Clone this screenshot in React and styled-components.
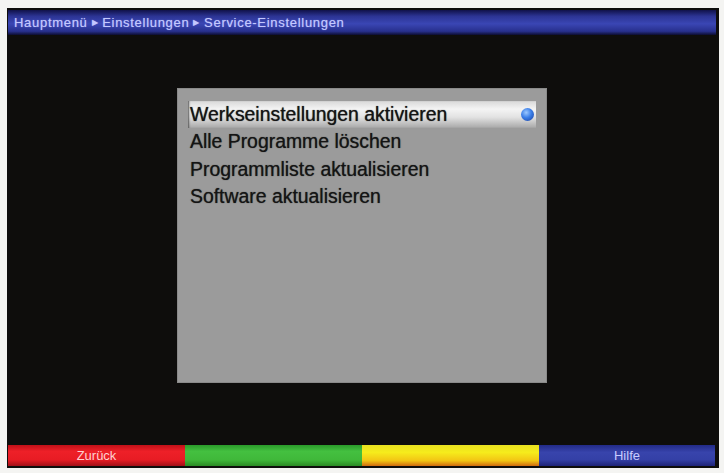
import React from "react";
import styled, { createGlobalStyle } from "styled-components";

const GlobalStyle = createGlobalStyle`
  html, body {
    margin: 0;
    padding: 0;
    background: #f4f4f2;
  }
  body {
    font-family: "Liberation Sans", Arial, sans-serif;
  }
`;

const Screen = styled.div`
  box-sizing: border-box;
  width: 712px;
  height: 460px;
  margin: 8px 0 0 7px;
  padding: 2px 3px 2px 1px;
  background: #0e0d0c;
  display: flex;
  flex-direction: column;
`;

const TitleBar = styled.div`
  height: 25px;
  display: flex;
  align-items: center;
  padding-left: 6px;
  background: linear-gradient(
    to bottom,
    #10124a 0%,
    #2c3494 25%,
    #3a46b4 55%,
    #28308e 85%,
    #0c0d30 100%
  );
  color: #c4c8ff;
  font-size: 13px;
  letter-spacing: 0.7px;
  text-shadow: 0 0 1px #8890e0;
  white-space: nowrap;
`;

const Crumb = styled.span`
  margin: 0 4px;
  font-size: 8px;
`;

const Main = styled.div`
  flex: 1;
  display: flex;
  justify-content: center;
  align-items: flex-start;
  padding-top: 53px;
`;

const Panel = styled.div`
  box-sizing: border-box;
  width: 370px;
  height: 295px;
  background: #9b9b9b;
  box-shadow: inset 0 0 0 1px #8a8a8a;
  padding: 13px 11px 0 11px;
  display: flex;
  flex-direction: column;
`;

const Item = styled.div`
  position: relative;
  height: 27.3px;
  display: flex;
  align-items: center;
  padding-left: 2px;
  font-size: 19.4px;
  color: #141414;
  text-shadow: 0 0 1px #333;
  white-space: nowrap;
  background: ${(p) =>
    p.$active
      ? "linear-gradient(to bottom, #d8d8d8 0%, #f4f4f4 30%, #e2e2e2 60%, #a8a8a8 100%)"
      : "transparent"};
  box-shadow: ${(p) => (p.$active ? "inset 2px 0 2px -1px #555" : "none")};
`;

const Bullet = styled.span`
  position: absolute;
  right: 2px;
  top: 7px;
  width: 13px;
  height: 13px;
  border-radius: 50%;
  background: radial-gradient(circle at 40% 35%, #9cc8ff 0%, #3a7ee8 45%, #1a3c98 100%);
`;

const Footer = styled.div`
  height: 21px;
  margin-top: auto;
  display: grid;
  grid-template-columns: 177px 177px 177px 176px;
`;

const Key = styled.div`
  display: flex;
  align-items: center;
  justify-content: center;
  font-size: 13px;
  color: ${(p) => p.$text};
  background: ${(p) => p.$bg};
`;

const keys = [
  {
    label: "Zurück",
    text: "#ffd0d0",
    bg: "linear-gradient(to bottom, #c01018 0%, #ee2028 30%, #e81c24 70%, #a01018 100%)",
  },
  {
    label: "",
    text: "#fff",
    bg: "linear-gradient(to bottom, #2a9a2a 0%, #44c040 30%, #40b83a 70%, #2a8a24 100%)",
  },
  {
    label: "",
    text: "#fff",
    bg: "linear-gradient(to bottom, #e8e020 0%, #f6ec1c 35%, #f2c414 75%, #d06a10 100%)",
  },
  {
    label: "Hilfe",
    text: "#c8ccff",
    bg: "linear-gradient(to bottom, #222a88 0%, #3844ac 35%, #3440a6 70%, #1e2478 100%)",
  },
];

const items = [
  "Werkseinstellungen aktivieren",
  "Alle Programme löschen",
  "Programmliste aktualisieren",
  "Software aktualisieren",
];

export default function App() {
  return (
    <>
      <GlobalStyle />
      <Screen>
        <TitleBar>
          Hauptmenü<Crumb>▶</Crumb>Einstellungen<Crumb>▶</Crumb>Service-Einstellungen
        </TitleBar>
        <Main>
          <Panel>
            {items.map((text, i) => (
              <Item key={text} $active={i === 0}>
                {text}
                {i === 0 && <Bullet />}
              </Item>
            ))}
          </Panel>
        </Main>
        <Footer>
          {keys.map((k, i) => (
            <Key key={i} $bg={k.bg} $text={k.text}>
              {k.label}
            </Key>
          ))}
        </Footer>
      </Screen>
    </>
  );
}
